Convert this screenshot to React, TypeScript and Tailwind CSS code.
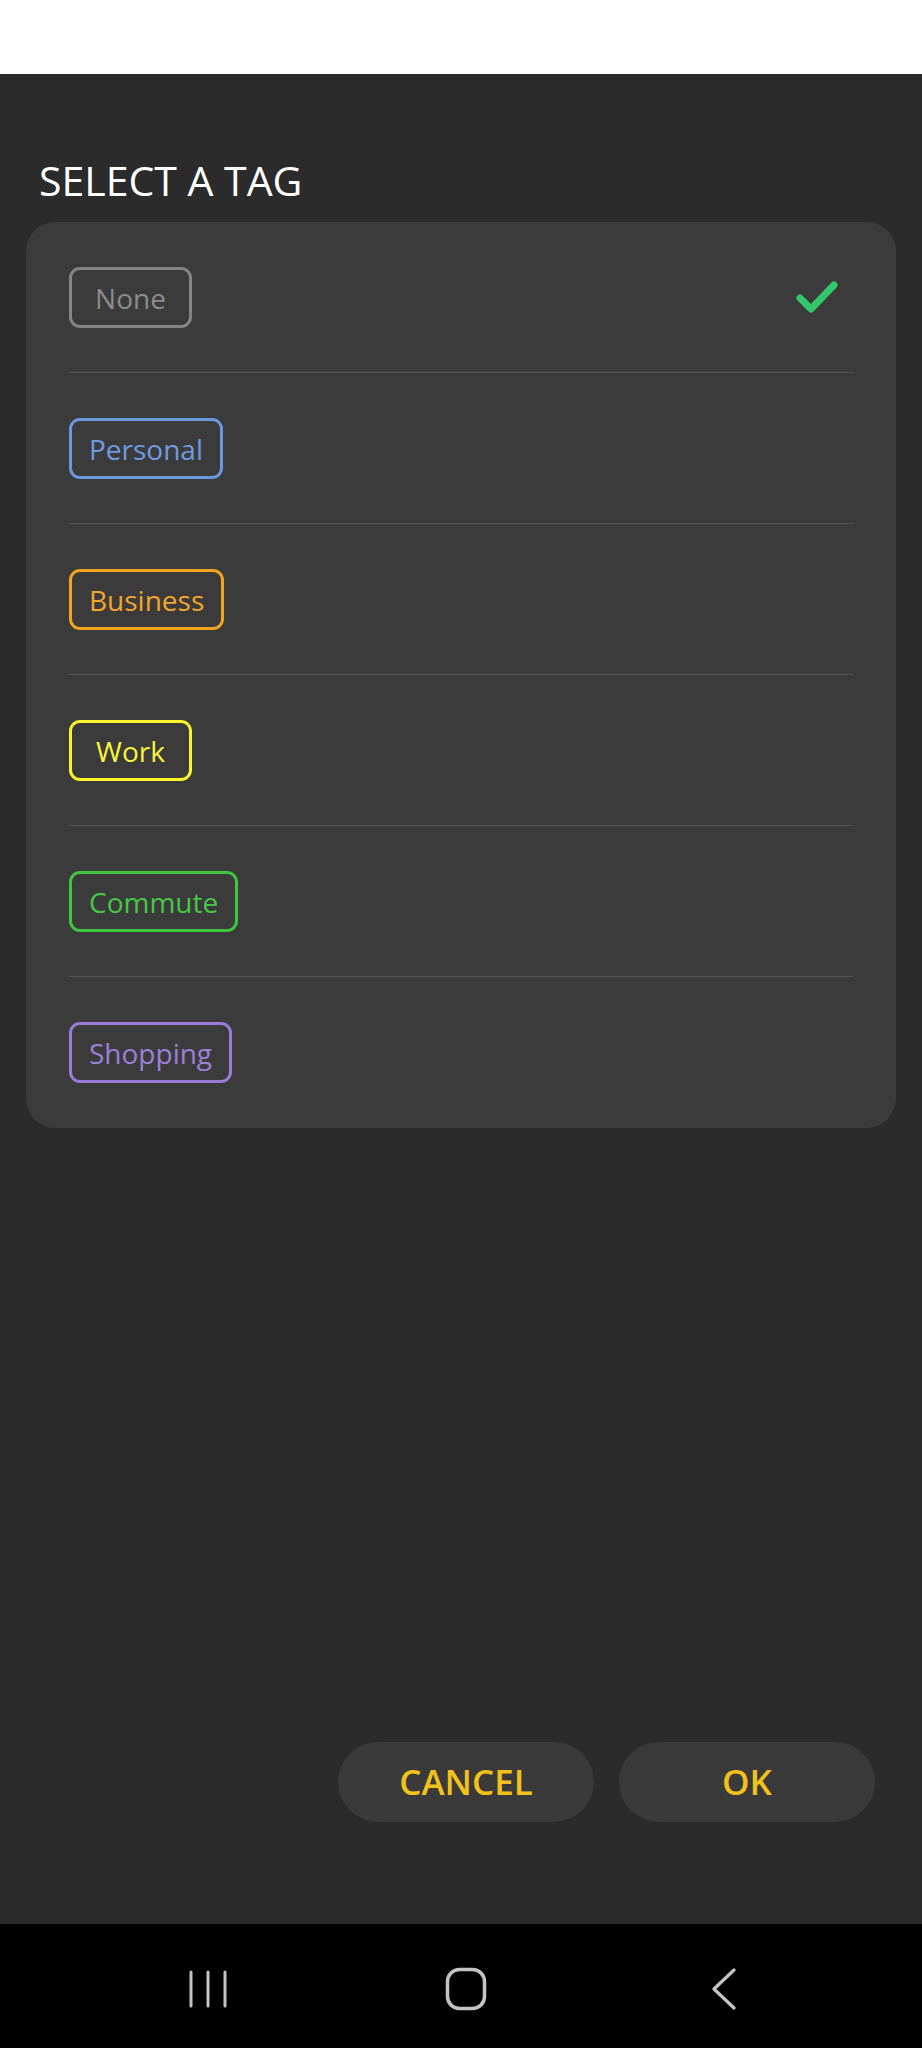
import { useState } from 'react';

type Tag = {
  id: string;
  label: string;
  color: string;
};

const TAGS: Tag[] = [
  { id: 'none', label: 'None', color: 'border-[#858585] text-[#8c8c8c]' },
  { id: 'personal', label: 'Personal', color: 'border-[#6b98de] text-[#6f9be0]' },
  { id: 'business', label: 'Business', color: 'border-[#f2a41f] text-[#f2a62a]' },
  { id: 'work', label: 'Work', color: 'border-[#f9f52c] text-[#f9f53a]' },
  { id: 'commute', label: 'Commute', color: 'border-[#3fc63f] text-[#46c846]' },
  { id: 'shopping', label: 'Shopping', color: 'border-[#9a7cd8] text-[#9d80d8]' },
];

const CheckIcon = () => (
  <svg width="44" height="36" viewBox="0 0 44 36" fill="none">
    <path
      d="M5 19 L16 30 L39 6"
      stroke="#31c76a"
      strokeWidth="7"
      strokeLinecap="round"
      strokeLinejoin="round"
    />
  </svg>
);

const NavBar = () => (
  <nav className="flex h-[124px] items-center bg-black pl-[79px] pt-[6px]">
    <div className="flex w-[258px] justify-center">
      <svg width="40" height="40" viewBox="0 0 40 40" fill="none">
        <path
          d="M3 3 V37 M20 3 V37 M37 3 V37"
          stroke="#c4c4c4"
          strokeWidth="3"
          strokeLinecap="round"
        />
      </svg>
    </div>
    <div className="flex w-[258px] justify-center">
      <svg width="42" height="44" viewBox="0 0 42 44" fill="none">
        <rect
          x="2.5"
          y="2.5"
          width="37"
          height="39"
          rx="12"
          stroke="#c4c4c4"
          strokeWidth="3.5"
        />
      </svg>
    </div>
    <div className="flex w-[258px] justify-center">
      <svg width="26" height="42" viewBox="0 0 26 42" fill="none">
        <path
          d="M23 2 L3 21 L23 40"
          stroke="#c4c4c4"
          strokeWidth="3.2"
          strokeLinecap="round"
          strokeLinejoin="round"
        />
      </svg>
    </div>
  </nav>
);

const App = () => {
  const [selected, setSelected] = useState<string>('none');

  return (
    <div
      className="flex h-[2048px] w-[922px] flex-col bg-[#2b2b2b]"
      style={{ fontFamily: '"Open Sans", "Noto Sans", sans-serif' }}
    >
      <div className="h-[74px] bg-white" />

      <div className="flex flex-1 flex-col">
        <h1 className="ml-[39px] mt-[86px] text-[41px] font-normal leading-none text-white">
          SELECT A TAG
        </h1>

        <div className="mx-[26px] mt-[21px] rounded-[29px] bg-[#3b3b3b] px-[43px]">
          {TAGS.map((tag, i) => (
            <button
              key={tag.id}
              type="button"
              onClick={() => setSelected(tag.id)}
              className={`flex h-[151px] w-full items-center justify-between ${
                i < TAGS.length - 1 ? 'border-b border-[#555555]' : ''
              }`}
            >
              <span
                className={`flex h-[61px] min-w-[123px] items-center justify-center rounded-[11px] border-[3px] px-[17px] pt-[1px] text-[28px] leading-none ${tag.color}`}
              >
                {tag.label}
              </span>
              {selected === tag.id && (
                <span className="mr-[14px]">
                  <CheckIcon />
                </span>
              )}
            </button>
          ))}
        </div>

        <div className="flex-1" />

        <div className="mb-[102px] flex justify-end gap-[25px] pr-[47px]">
          <button
            type="button"
            className="h-[80px] w-[256px] rounded-full bg-[#3a3a3a] text-[35px] font-semibold text-[#f3c11c]"
          >
            CANCEL
          </button>
          <button
            type="button"
            className="h-[80px] w-[256px] rounded-full bg-[#3a3a3a] text-[35px] font-semibold text-[#f3c11c]"
          >
            OK
          </button>
        </div>
      </div>

      <NavBar />
    </div>
  );
};

export default App;
